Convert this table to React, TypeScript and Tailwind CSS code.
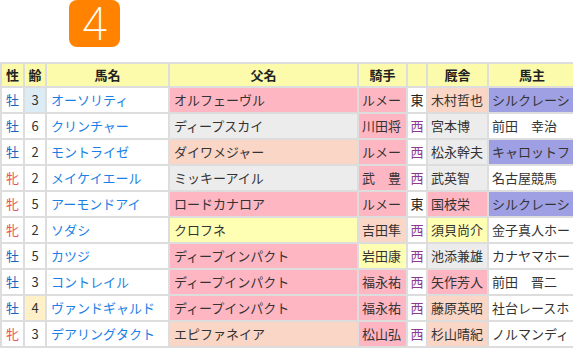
import React from "react";

type Row = {
  sex: string;
  age: string;
  ageBg?: string;
  name: string;
  sire: string;
  sireBg: string;
  jockey: string;
  jockeyBg: string;
  area: string;
  trainer: string;
  trainerBg: string;
  owner: string;
  ownerBg: string;
};

const PINK = "bg-[#ffb6c3]";
const GRAY = "bg-[#ececec]";
const PEACH = "bg-[#fad6c6]";
const YELLOW = "bg-[#ffffb3]";
const PURPLE = "bg-[#9f9fe3]";
const WHITE = "bg-white";

const rows: Row[] = [
  { sex: "牡", age: "3", ageBg: "bg-[#dcecf5]", name: "オーソリティ", sire: "オルフェーヴル", sireBg: PINK, jockey: "ルメール", jockeyBg: PINK, area: "東", trainer: "木村哲也", trainerBg: PEACH, owner: "シルクレーシング", ownerBg: PURPLE },
  { sex: "牡", age: "6", name: "クリンチャー", sire: "ディープスカイ", sireBg: GRAY, jockey: "川田将雅", jockeyBg: PINK, area: "西", trainer: "宮本博", trainerBg: GRAY, owner: "前田　幸治", ownerBg: WHITE },
  { sex: "牡", age: "2", name: "モントライゼ", sire: "ダイワメジャー", sireBg: PEACH, jockey: "ルメール", jockeyBg: PINK, area: "西", trainer: "松永幹夫", trainerBg: GRAY, owner: "キャロットファーム", ownerBg: PURPLE },
  { sex: "牝", age: "2", name: "メイケイエール", sire: "ミッキーアイル", sireBg: GRAY, jockey: "武　豊", jockeyBg: PINK, area: "西", trainer: "武英智", trainerBg: GRAY, owner: "名古屋競馬", ownerBg: WHITE },
  { sex: "牝", age: "5", name: "アーモンドアイ", sire: "ロードカナロア", sireBg: PINK, jockey: "ルメール", jockeyBg: PINK, area: "東", trainer: "国枝栄", trainerBg: PINK, owner: "シルクレーシング", ownerBg: PURPLE },
  { sex: "牝", age: "2", name: "ソダシ", sire: "クロフネ", sireBg: YELLOW, jockey: "吉田隼人", jockeyBg: PEACH, area: "西", trainer: "須貝尚介", trainerBg: YELLOW, owner: "金子真人ホールディングス", ownerBg: WHITE },
  { sex: "牡", age: "5", name: "カツジ", sire: "ディープインパクト", sireBg: PINK, jockey: "岩田康誠", jockeyBg: YELLOW, area: "西", trainer: "池添兼雄", trainerBg: GRAY, owner: "カナヤマホールディングス", ownerBg: WHITE },
  { sex: "牡", age: "3", name: "コントレイル", sire: "ディープインパクト", sireBg: PINK, jockey: "福永祐一", jockeyBg: PINK, area: "西", trainer: "矢作芳人", trainerBg: PINK, owner: "前田　晋二", ownerBg: WHITE },
  { sex: "牡", age: "4", ageBg: "bg-[#fff0c8]", name: "ヴァンドギャルド", sire: "ディープインパクト", sireBg: PINK, jockey: "福永祐一", jockeyBg: PINK, area: "西", trainer: "藤原英昭", trainerBg: PEACH, owner: "社台レースホース", ownerBg: WHITE },
  { sex: "牝", age: "3", name: "デアリングタクト", sire: "エピファネイア", sireBg: PEACH, jockey: "松山弘平", jockeyBg: PINK, area: "西", trainer: "杉山晴紀", trainerBg: PEACH, owner: "ノルマンディー", ownerBg: WHITE },
];

const cell = "h-[24px] leading-[24px] overflow-hidden whitespace-nowrap";
const head = "h-[22px] leading-[22px] overflow-hidden whitespace-nowrap bg-[#fbfbab] font-bold text-[#222] text-center";

export default function App() {
  return (
    <div className="w-[573px] h-[348px] overflow-hidden bg-white text-[13px] text-[#333]" style={{ fontFamily: '"Noto Sans CJK JP", "Noto Sans", sans-serif' }}>
      <div className="h-[62px] pl-[69px]">
        <div className="w-[51px] h-[47px] rounded-[8px] bg-[#ff8200] flex items-center justify-center text-white text-[46px] font-extralight leading-none" style={{ fontFamily: "Roboto, sans-serif" }}>
          4
        </div>
      </div>
      <div className="w-[600px] bg-[#dddddd] p-[2px] pr-0 grid grid-cols-[21px_20px_121px_187px_47px_18px_59px_86px_10px] gap-[2px]">
        <div className={head}>性</div>
        <div className={head}>齢</div>
        <div className={head}>馬名</div>
        <div className={head}>父名</div>
        <div className={head}>騎手</div>
        <div className={head}></div>
        <div className={head}>厩舎</div>
        <div className={head}>馬主</div>
        <div className={head}></div>
        {rows.map((r, i) => (
          <React.Fragment key={i}>
            <div className={`${cell} bg-white text-center ${r.sex === "牡" ? "text-[#1565c0]" : "text-[#ef5350]"}`}>{r.sex}</div>
            <div className={`${cell} text-center ${r.ageBg ?? "bg-white"}`}>{r.age}</div>
            <div className={`${cell} bg-white pl-[4px] text-[#1a7fe6]`}>{r.name}</div>
            <div className={`${cell} ${r.sireBg} pl-[4px]`}>{r.sire}</div>
            <div className={`${cell} ${r.jockeyBg} pl-[3px]`}>
              <span className="block w-[39px] overflow-hidden">{r.jockey}</span>
            </div>
            <div className={`${cell} bg-white text-center ${r.area === "西" ? "text-[#8e3a8e]" : "text-[#222]"}`}>{r.area}</div>
            <div className={`${cell} ${r.trainerBg} pl-[3px]`}>{r.trainer}</div>
            <div className={`${cell} ${r.ownerBg} pl-[3px]`}>
              <span className="block w-[78px] overflow-hidden">{r.owner}</span>
            </div>
            <div className={`${cell} bg-white`}></div>
          </React.Fragment>
        ))}
      </div>
    </div>
  );
}
